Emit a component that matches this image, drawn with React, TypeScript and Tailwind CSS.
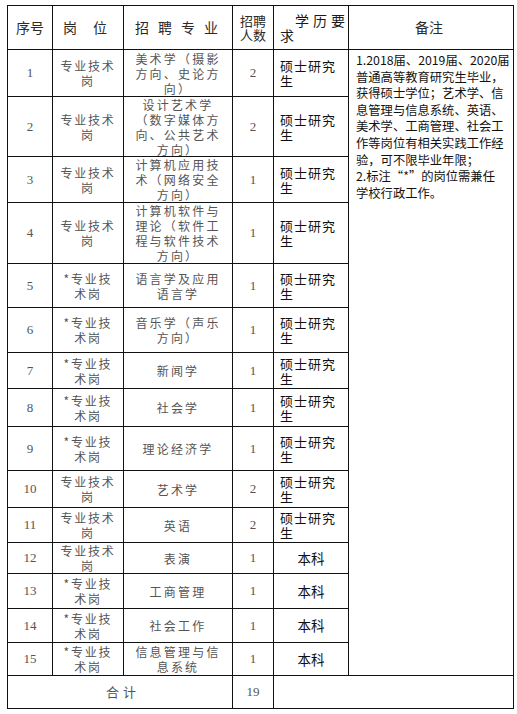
import React from "react";

type Row = {
  n: string;
  star: boolean;
  major: string[];
  cnt: string;
  edu: "m" | "b";
};

const rows: Row[] = [
  { n: "1", star: false, major: ["美术学（摄影", "方向、史论方", "向）"], cnt: "2", edu: "m" },
  { n: "2", star: false, major: ["设计艺术学", "（数字媒体方", "向、公共艺术", "方向）"], cnt: "2", edu: "m" },
  { n: "3", star: false, major: ["计算机应用技", "术（网络安全", "方向）"], cnt: "1", edu: "m" },
  { n: "4", star: false, major: ["计算机软件与", "理论（软件工", "程与软件技术", "方向）"], cnt: "1", edu: "m" },
  { n: "5", star: true, major: ["语言学及应用", "语言学"], cnt: "1", edu: "m" },
  { n: "6", star: true, major: ["音乐学（声乐", "方向）"], cnt: "1", edu: "m" },
  { n: "7", star: true, major: ["新闻学"], cnt: "1", edu: "m" },
  { n: "8", star: true, major: ["社会学"], cnt: "1", edu: "m" },
  { n: "9", star: true, major: ["理论经济学"], cnt: "1", edu: "m" },
  { n: "10", star: false, major: ["艺术学"], cnt: "2", edu: "m" },
  { n: "11", star: false, major: ["英语"], cnt: "2", edu: "m" },
  { n: "12", star: false, major: ["表演"], cnt: "1", edu: "b" },
  { n: "13", star: true, major: ["工商管理"], cnt: "1", edu: "b" },
  { n: "14", star: true, major: ["社会工作"], cnt: "1", edu: "b" },
  { n: "15", star: true, major: ["信息管理与信", "息系统"], cnt: "1", edu: "b" },
];

const notes = [
  "1.2018届、2019届、2020届",
  "普通高等教育研究生毕业，",
  "获得硕士学位；艺术学、信",
  "息管理与信息系统、英语、",
  "美术学、工商管理、社会工",
  "作等岗位有相关实践工作经",
  "验，可不限毕业年限；",
  "2.标注“*”的岗位需兼任",
  "学校行政工作。",
];

const cjk = "font-['Noto_Sans_CJK_SC',sans-serif]";
const num = "font-['Liberation_Serif','Noto_Sans_CJK_SC',serif]";
const cell = "bg-white flex items-center justify-center text-center";

function Lines({ lines }: { lines: string[] }) {
  return (
    <div className="flex flex-col items-center">
      {lines.map((l, i) => (
        <div key={i} className="whitespace-nowrap">
          {l}
        </div>
      ))}
    </div>
  );
}

export default function App() {
  return (
    <div className={`w-[517px] h-[714px] bg-white pt-[5px] pl-[7px] ${cjk}`}>
      <div className="w-[507px] bg-[#111] p-px gap-px grid grid-cols-[44px_70px_108px_40px_74px_164px] grid-rows-[43px_46px_59px_45px_60px_43px_44px_35px_37px_43px_36px_34px_30px_34px_33px_32px_32px]">
        {/* header */}
        <div className={`${cell} text-[14px] text-[#2a2a2a]`}>序号</div>
        <div className={`${cell} text-[14px] text-[#2a2a2a]`}>
          <span className="tracking-[16px] pl-[10px]">岗位</span>
        </div>
        <div className={`${cell} text-[14px] text-[#2a2a2a]`}>
          <span className="tracking-[9px] pl-[6px]">招聘专业</span>
        </div>
        <div className={`${cell} text-[13px] leading-[14px] text-[#2a2a2a]`}>
          <Lines lines={["招聘", "人数"]} />
        </div>
        <div className="bg-white flex items-center text-[14px] leading-[15px] text-[#1a1a1a] pl-[6px]">
          <div>
            <div className="pl-[15px] tracking-[4px] whitespace-nowrap">学历要</div>
            <div>求</div>
          </div>
        </div>
        <div className={`${cell} text-[14px] text-[#2a2a2a] pr-[4px]`}>备注</div>

        {rows.map((r, i) => (
          <React.Fragment key={r.n}>
            <div className={`${cell} ${num} text-[13px] text-[#555]`}>{r.n}</div>
            <div className={`${cell} text-[12px] leading-[15px] tracking-[1.8px] text-[#555]`}>
              <Lines lines={r.star ? ["*专业技", "术岗"] : ["专业技术", "岗"]} />
            </div>
            <div className={`${cell} text-[12px] leading-[15px] tracking-[2.2px] text-[#555]`}>
              <Lines lines={r.major} />
            </div>
            <div className={`${cell} ${num} text-[13px] text-[#555]`}>{r.cnt}</div>
            {r.edu === "m" ? (
              <div className="bg-white flex items-center pl-[6px] text-[13px] leading-[15px] tracking-[1px] text-[#111]">
                <div>
                  <div className="whitespace-nowrap">硕士研究</div>
                  <div>生</div>
                </div>
              </div>
            ) : (
              <div className={`${cell} text-[13.5px] text-[#111]`}>本科</div>
            )}
            {i === 0 && (
              <div className="bg-white row-span-15 pl-[7px] pt-[2px] text-[12.3px] leading-[16.6px] text-[#111]">
                {notes.map((l, k) => (
                  <div key={k} className="whitespace-nowrap">
                    {l}
                  </div>
                ))}
              </div>
            )}
          </React.Fragment>
        ))}

        {/* total */}
        <div className={`${cell} col-span-3 text-[13px] tracking-[4px] text-[#555] pl-[6px]`}>合计</div>
        <div className={`${cell} ${num} text-[13px] text-[#555]`}>19</div>
        <div className="bg-white col-span-2" />
      </div>
    </div>
  );
}
